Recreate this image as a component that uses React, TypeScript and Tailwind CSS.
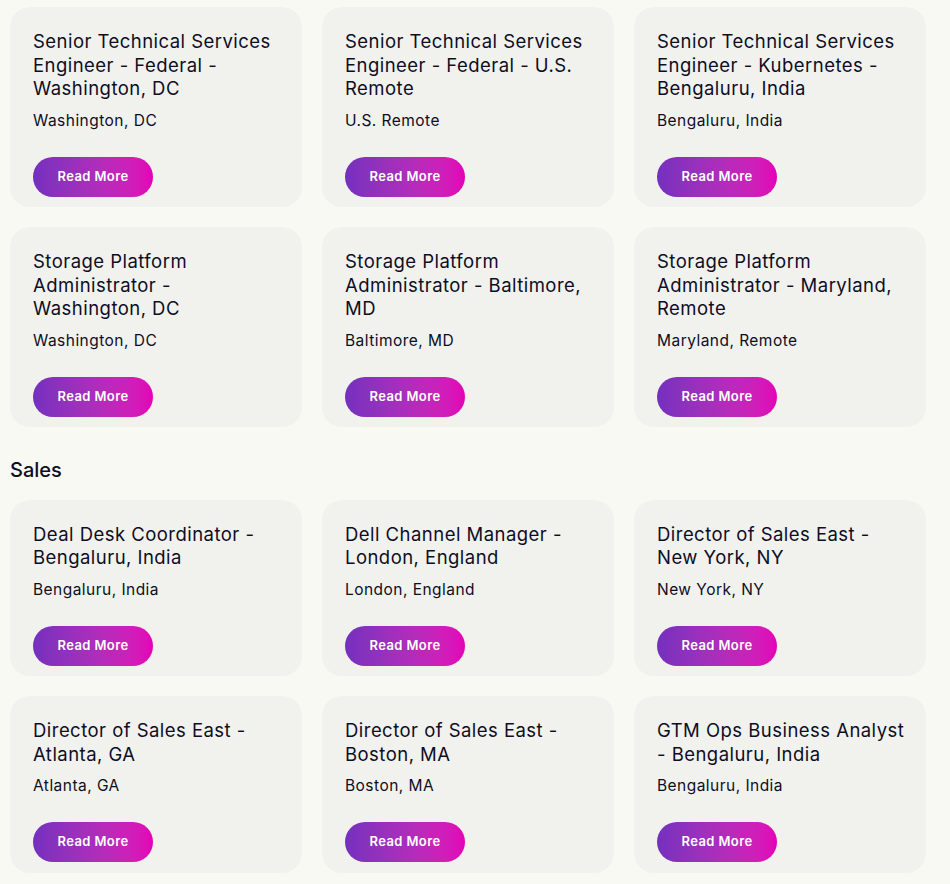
import React from "react";

type Job = { title: string[]; loc: string };

const eng: Job[] = [
  { title: ["Senior Technical Services", "Engineer - Federal -", "Washington, DC"], loc: "Washington, DC" },
  { title: ["Senior Technical Services", "Engineer - Federal - U.S.", "Remote"], loc: "U.S. Remote" },
  { title: ["Senior Technical Services", "Engineer - Kubernetes -", "Bengaluru, India"], loc: "Bengaluru, India" },
  { title: ["Storage Platform", "Administrator -", "Washington, DC"], loc: "Washington, DC" },
  { title: ["Storage Platform", "Administrator - Baltimore,", "MD"], loc: "Baltimore, MD" },
  { title: ["Storage Platform", "Administrator - Maryland,", "Remote"], loc: "Maryland, Remote" },
];

const sales: Job[] = [
  { title: ["Deal Desk Coordinator -", "Bengaluru, India"], loc: "Bengaluru, India" },
  { title: ["Dell Channel Manager -", "London, England"], loc: "London, England" },
  { title: ["Director of Sales East -", "New York, NY"], loc: "New York, NY" },
  { title: ["Director of Sales East -", "Atlanta, GA"], loc: "Atlanta, GA" },
  { title: ["Director of Sales East -", "Boston, MA"], loc: "Boston, MA" },
  { title: ["GTM Ops Business Analyst", "- Bengaluru, India"], loc: "Bengaluru, India" },
];

function Card({ job }: { job: Job }) {
  return (
    <div className="flex flex-col rounded-[20px] bg-[#f1f2ed] pl-[23px] pr-3 pt-[23px] pb-[10.5px]">
      <h3 className="text-[18.5px] leading-[23.5px] font-normal tracking-[0.025em] text-[#0e0d26]">
        {job.title.map((l, i) => (
          <span key={i} className="block whitespace-nowrap">
            {l}
          </span>
        ))}
      </h3>
      <p className="mt-[9px] text-[15.5px] leading-[22px] tracking-[0.03em] text-[#0e0d26]">{job.loc}</p>
      <button className="mt-[25px] h-10 w-[120px] rounded-full bg-gradient-to-r from-[#7430be] to-[#e400b7] text-[13px] font-semibold tracking-[0.03em] text-white">
        Read More
      </button>
    </div>
  );
}

export default function App() {
  return (
    <div
      className="min-h-[884px] bg-[#f8f9f3] pl-[10px] pr-6 pt-[7px] pb-4"
      style={{ fontFamily: "Inter, 'Noto Sans', sans-serif" }}
    >
      <div className="grid grid-cols-3 gap-5">
        {eng.map((j, i) => (
          <Card key={i} job={j} />
        ))}
      </div>
      <h2 className="mt-[28.5px] mb-[16px] text-[20px] leading-[28px] font-medium text-[#0e0d26]">Sales</h2>
      <div className="grid grid-cols-3 gap-5">
        {sales.map((j, i) => (
          <Card key={i} job={j} />
        ))}
      </div>
    </div>
  );
}
